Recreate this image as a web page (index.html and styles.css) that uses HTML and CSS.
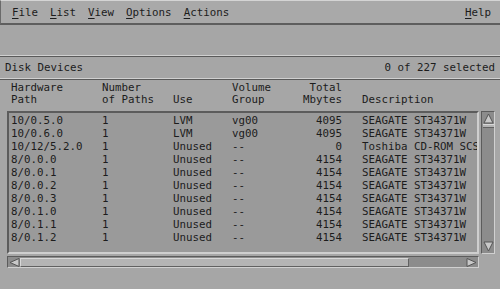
FILE: index.html
```html
<!DOCTYPE html>
<html lang="en">
<head>
    <meta charset="UTF-8">
    <title>Disk Devices</title>
    <link rel="stylesheet" href="styles.css">
</head>
<body>
    <div class="window">
        <!-- Menu Bar -->
        <div class="menubar">
            <span class="menu"><u>F</u>ile</span>
            <span class="menu"><u>L</u>ist</span>
            <span class="menu"><u>V</u>iew</span>
            <span class="menu"><u>O</u>ptions</span>
            <span class="menu"><u>A</u>ctions</span>
            <span class="menu help"><u>H</u>elp</span>
        </div>

        <div class="toolbar-space"></div>
        <div class="sep"></div>

        <!-- Title Row -->
        <div class="title-row">
            <span>Disk Devices</span>
            <span>0 of 227 selected</span>
        </div>
        <div class="sep"></div>

        <!-- Column Headers -->
        <div class="cols head">
            <span>Hardware<br>Path</span>
            <span>Number<br>of Paths</span>
            <span><br>Use</span>
            <span>Volume<br>Group</span>
            <span class="num">Total<br>Mbytes</span>
            <span class="desc"><br>Description</span>
        </div>

        <!-- List + Scrollbars -->
        <div class="list-area">
            <div class="list">
                <div class="cols row"><span>10/0.5.0</span><span>1</span><span>LVM</span><span>vg00</span><span class="num">4095</span><span class="desc">SEAGATE ST34371W</span></div>
                <div class="cols row"><span>10/0.6.0</span><span>1</span><span>LVM</span><span>vg00</span><span class="num">4095</span><span class="desc">SEAGATE ST34371W</span></div>
                <div class="cols row"><span>10/12/5.2.0</span><span>1</span><span>Unused</span><span>--</span><span class="num">0</span><span class="desc">Toshiba CD-ROM SCSI</span></div>
                <div class="cols row"><span>8/0.0.0</span><span>1</span><span>Unused</span><span>--</span><span class="num">4154</span><span class="desc">SEAGATE ST34371W</span></div>
                <div class="cols row"><span>8/0.0.1</span><span>1</span><span>Unused</span><span>--</span><span class="num">4154</span><span class="desc">SEAGATE ST34371W</span></div>
                <div class="cols row"><span>8/0.0.2</span><span>1</span><span>Unused</span><span>--</span><span class="num">4154</span><span class="desc">SEAGATE ST34371W</span></div>
                <div class="cols row"><span>8/0.0.3</span><span>1</span><span>Unused</span><span>--</span><span class="num">4154</span><span class="desc">SEAGATE ST34371W</span></div>
                <div class="cols row"><span>8/0.1.0</span><span>1</span><span>Unused</span><span>--</span><span class="num">4154</span><span class="desc">SEAGATE ST34371W</span></div>
                <div class="cols row"><span>8/0.1.1</span><span>1</span><span>Unused</span><span>--</span><span class="num">4154</span><span class="desc">SEAGATE ST34371W</span></div>
                <div class="cols row"><span>8/0.1.2</span><span>1</span><span>Unused</span><span>--</span><span class="num">4154</span><span class="desc">SEAGATE ST34371W</span></div>
            </div>

            <div class="vscroll">
                <svg class="arrow" width="11" height="11" viewBox="0 0 11 11"><polygon points="5.5,1 10,10 1,10" fill="#c8c8c8" stroke="#555" stroke-width="1"/></svg>
                <div class="vthumb"></div>
                <div class="vtrack"></div>
                <svg class="arrow" width="11" height="11" viewBox="0 0 11 11"><polygon points="1,1 10,1 5.5,10" fill="#c8c8c8" stroke="#555" stroke-width="1"/></svg>
            </div>

            <div class="hscroll">
                <svg class="arrow" width="11" height="9" viewBox="0 0 11 9"><polygon points="1,4.5 10,0.5 10,8.5" fill="#c8c8c8" stroke="#555" stroke-width="1"/></svg>
                <div class="hthumb"></div>
                <div class="htrack"></div>
                <svg class="arrow" width="11" height="9" viewBox="0 0 11 9"><polygon points="10,4.5 1,0.5 1,8.5" fill="#c8c8c8" stroke="#555" stroke-width="1"/></svg>
            </div>
        </div>
    </div>
</body>
</html>
```

FILE: styles.css
```css
/* General Reset */
* {
    box-sizing: border-box;
    margin: 0;
    padding: 0;
}

body {
    font-family: "DejaVu Sans Mono", "Liberation Mono", monospace;
    font-size: 10.8px;
    color: #1c1c1c;
    background-color: #a6a6a6;
    width: 500px;
    height: 289px;
    overflow: hidden;
}

.window {
    width: 500px;
    height: 289px;
}

/* Menu Bar */
.menubar {
    display: flex;
    align-items: center;
    height: 25px;
    padding-left: 11px;
    padding-right: 9px;
    padding-top: 1px;
    gap: 12px;
    background-color: #a9a9a9;
    border-top: 1px solid #d4d4d4;
    border-left: 1px solid #6a6a6a;
    border-bottom: 2px solid #5e5e5e;
}

.menu u {
    text-underline-offset: 2px;
}

.help {
    margin-left: auto;
}

.toolbar-space {
    height: 30px;
}

.sep {
    height: 2px;
    border-top: 1px solid #d0d0d0;
    border-bottom: 1px solid #5a5a5a;
}

/* Title Row */
.title-row {
    display: flex;
    justify-content: space-between;
    align-items: center;
    height: 21px;
    padding: 0 5px 0 5px;
}

/* Columns */
.cols {
    display: grid;
    grid-template-columns: 91px 71px 59px 60px 50px 1fr;
    white-space: nowrap;
}

.num {
    text-align: right;
}

.desc {
    padding-left: 20px;
    overflow: hidden;
}

.head {
    padding: 2px 0 0 11px;
    height: 31px;
    line-height: 12px;
}

/* List Area */
.list-area {
    display: grid;
    grid-template-columns: 472px 14px;
    grid-template-rows: 143px 12px;
    column-gap: 2px;
    row-gap: 2px;
    padding-left: 7px;
}

.list {
    background-color: #9a9a9a;
    border-top: 2px solid #5c5c5c;
    border-left: 2px solid #5c5c5c;
    border-bottom: 2px solid #cfcfcf;
    border-right: 2px solid #cfcfcf;
    padding: 1px 0 0 2px;
    overflow: hidden;
}

.row {
    height: 13px;
    line-height: 13px;
}

.vscroll {
    display: flex;
    flex-direction: column;
    align-items: center;
    background-color: #8c8c8c;
    border-top: 1px solid #5c5c5c;
    border-left: 1px solid #5c5c5c;
    border-bottom: 1px solid #d0d0d0;
    border-right: 1px solid #d0d0d0;
    padding: 1px 0;
}

.vthumb {
    width: 11px;
    height: 4px;
    background-color: #b4b4b4;
    border-top: 1px solid #d8d8d8;
    border-bottom: 1px solid #606060;
}

.vtrack {
    flex: 1;
}

.hscroll {
    display: flex;
    align-items: center;
    background-color: #8c8c8c;
    border-top: 1px solid #5c5c5c;
    border-left: 1px solid #5c5c5c;
    border-bottom: 1px solid #d0d0d0;
    border-right: 1px solid #d0d0d0;
    padding: 0 1px;
}

.hthumb {
    width: 389px;
    height: 9px;
    background-color: #b4b4b4;
    border-top: 1px solid #d8d8d8;
    border-left: 1px solid #d8d8d8;
    border-bottom: 1px solid #606060;
    border-right: 1px solid #606060;
}

.htrack {
    flex: 1;
}

.arrow {
    display: block;
    flex: none;
}
```
